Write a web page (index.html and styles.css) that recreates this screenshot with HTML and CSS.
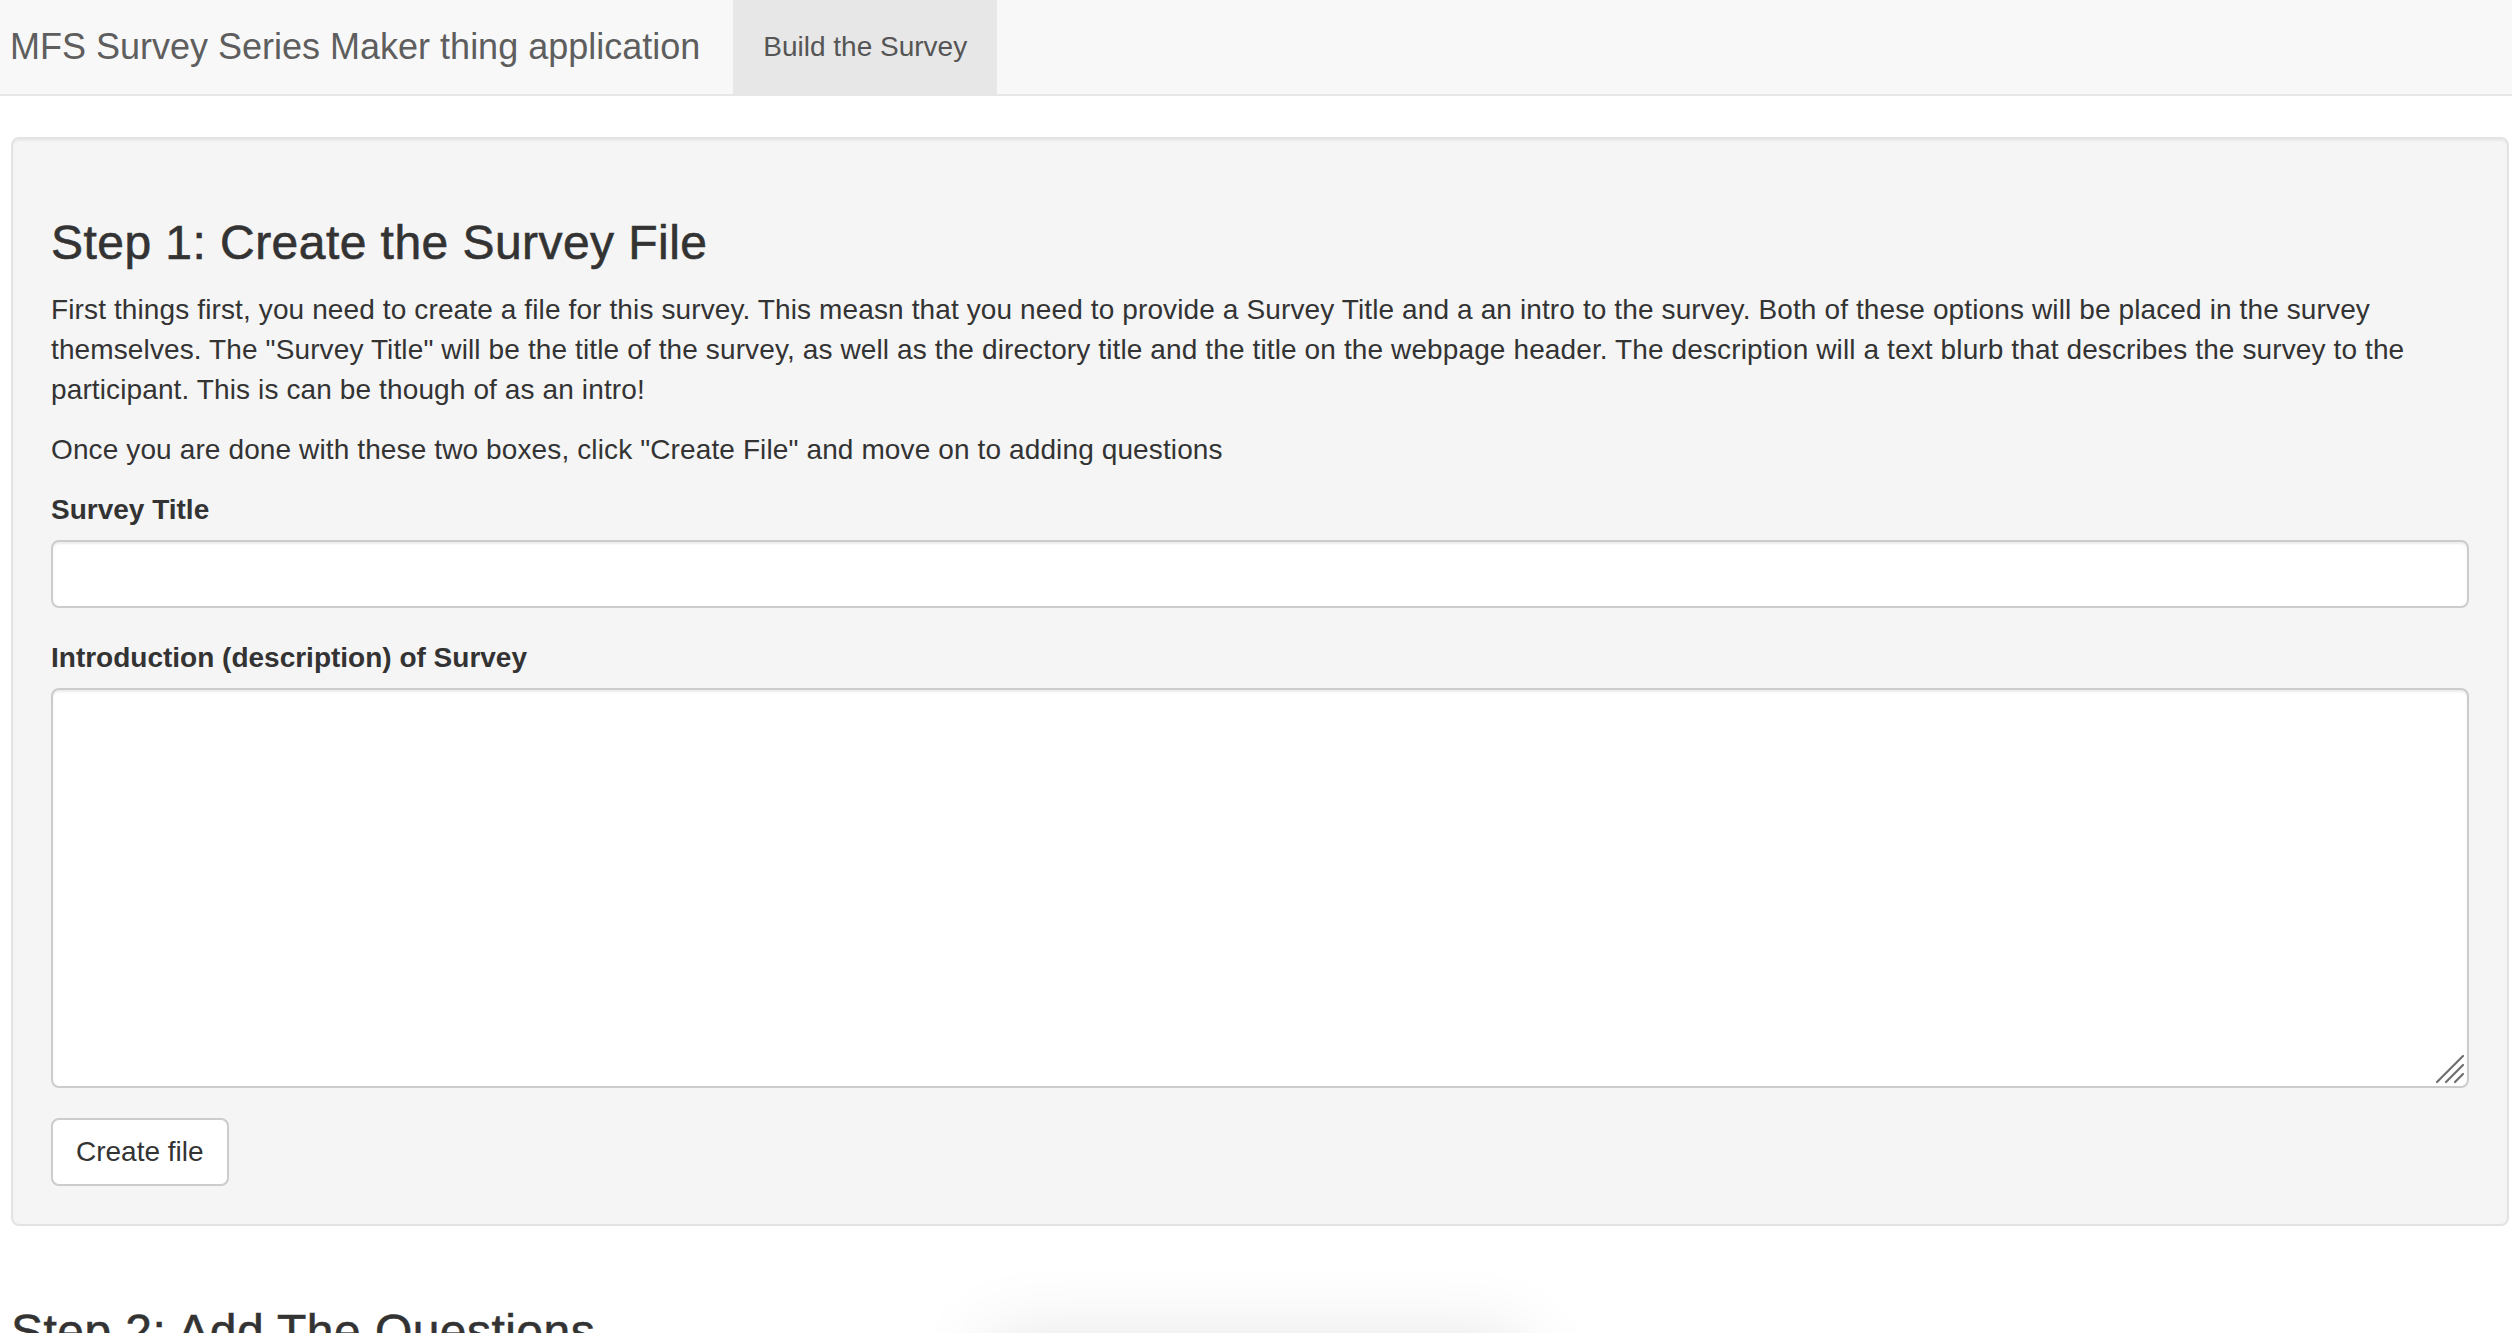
FILE: index.html
```html
<!DOCTYPE html>
<html lang="en">
<head>
<meta charset="utf-8">
<title>MFS Survey Series Maker thing application</title>
<link rel="stylesheet" href="styles.css">
</head>
<body>
<nav class="navbar">
  <span class="brand">MFS Survey Series Maker thing application</span>
  <a class="tab active" href="#">Build the Survey</a>
</nav>
<main class="page">
  <section class="well">
    <h3 class="step-title">Step 1: Create the Survey File</h3>
    <p class="text">First things first, you need to create a file for this survey. This measn that you need to provide a Survey Title and a an intro to the survey. Both of these options will be placed in the survey themselves. The "Survey Title" will be the title of the survey, as well as the directory title and the title on the webpage header. The description will a text blurb that describes the survey to the participant. This is can be though of as an intro!</p>
    <p class="text">Once you are done with these two boxes, click "Create File" and move on to adding questions</p>
    <div class="form-group">
      <label class="label" for="title">Survey Title</label>
      <input class="control" id="title" type="text">
    </div>
    <div class="form-group">
      <label class="label" for="intro">Introduction (description) of Survey</label>
      <div class="area-wrap">
        <textarea class="control area" id="intro"></textarea>
        <svg class="grip" width="30" height="30" viewBox="0 0 30 30" aria-hidden="true">
          <path d="M2 28 L28 2 M11 28 L28 11 M20 28 L28 20" stroke="#6f6f6f" stroke-width="2.2" stroke-linecap="round" fill="none"/>
        </svg>
      </div>
    </div>
    <button class="btn" type="button">Create file</button>
  </section>
  <h3 class="step-title">Step 2: Add The Questions</h3>
</main>
<div class="floating"></div>
</body>
</html>
```

FILE: styles.css
```css
html, body {
  margin: 0;
  padding: 0;
  background: #ffffff;
  overflow: hidden;
}
body {
  font-family: "Liberation Sans", Arial, Helvetica, sans-serif;
  font-size: 28px;
  line-height: 40px;
  letter-spacing: 0.12px;
  color: #333333;
  height: 1333px;
  position: relative;
}
.navbar {
  display: flex;
  align-items: stretch;
  height: 94px;
  background: #f8f8f8;
  border-bottom: 2px solid #e7e7e7;
  letter-spacing: 0;
}
.brand {
  font-size: 36px;
  line-height: 94px;
  color: #5e5e5e;
  padding: 0 33px 0 10px;
  white-space: nowrap;
}
.tab {
  display: block;
  font-size: 28px;
  line-height: 94px;
  padding: 0 30px;
  color: #555555;
  text-decoration: none;
}
.tab.active {
  background: #e7e7e7;
}
.page {
  padding: 0 3px 0 11px;
}
.well {
  margin-top: 41px;
  margin-bottom: 80px;
  padding: 38px;
  background: #f5f5f5;
  border: 2px solid #e3e3e3;
  border-radius: 8px;
  box-shadow: inset 0 2px 2px rgba(0, 0, 0, 0.05);
}
.step-title {
  font-size: 48px;
  line-height: 1.1;
  font-weight: 400;
  letter-spacing: 0.45px;
  -webkit-text-stroke: 0.6px #333333;
  margin: 40px 0 20px;
  color: #333333;
}
.text {
  margin: 0 0 20px;
}
.form-group {
  margin-bottom: 30px;
}
.label {
  display: inline-block;
  font-weight: 700;
  letter-spacing: 0;
  margin-bottom: 10px;
}
.control {
  display: block;
  box-sizing: border-box;
  width: 100%;
  height: 68px;
  padding: 12px 24px;
  font-family: inherit;
  font-size: 28px;
  line-height: 40px;
  color: #555555;
  background: #ffffff;
  border: 2px solid #cccccc;
  border-radius: 8px;
  box-shadow: inset 0 2px 2px rgba(0, 0, 0, 0.075);
  outline: none;
  margin: 0;
}
.area-wrap {
  position: relative;
}
.area {
  height: 400px;
  resize: none;
}
.grip {
  position: absolute;
  right: 4px;
  bottom: 4px;
}
.btn {
  display: inline-block;
  font-family: inherit;
  font-size: 28px;
  line-height: 40px;
  letter-spacing: 0;
  padding: 12px 23px;
  color: #333333;
  background: #ffffff;
  border: 2px solid #cccccc;
  border-radius: 8px;
  margin: 0;
}
.floating {
  position: absolute;
  left: 990px;
  top: 1345px;
  width: 530px;
  height: 120px;
  background: #ffffff;
  border-radius: 12px;
  box-shadow: 0 0 80px 4px rgba(0, 0, 0, 0.12);
}
```
